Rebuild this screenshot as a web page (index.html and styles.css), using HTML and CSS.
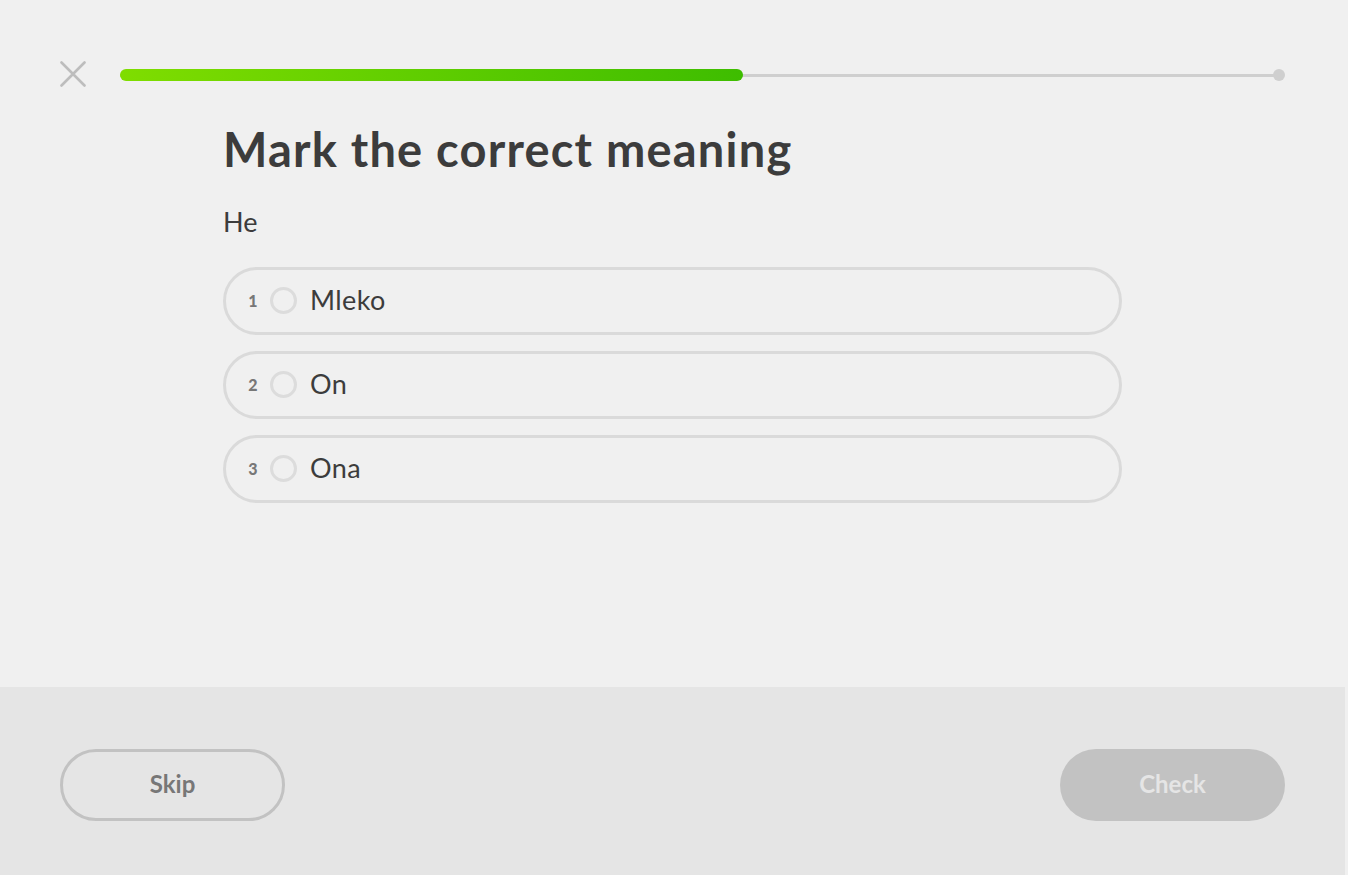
FILE: index.html
```html
<!DOCTYPE html>
<html lang="en">
<head>
<meta charset="utf-8">
<title>Mark the correct meaning</title>
<link rel="stylesheet" href="styles.css">
</head>
<body>
<div class="app">
  <header class="top">
    <button class="close" aria-label="Close">
      <svg width="26" height="26" viewBox="0 0 26 26"><path d="M1.5 1.5 L24.5 24.5 M24.5 1.5 L1.5 24.5" stroke="#bdbdbd" stroke-width="2.6" stroke-linecap="round" fill="none"/></svg>
    </button>
    <div class="progress">
      <div class="track"></div>
      <div class="fill" style="width:623px"></div>
      <div class="dot"></div>
    </div>
  </header>
  <main class="content">
    <h1 class="title">Mark the correct meaning</h1>
    <p class="prompt">He</p>
    <ul class="choices">
      <li class="choice"><span class="num">1</span><span class="radio"></span><span class="label">Mleko</span></li>
      <li class="choice"><span class="num">2</span><span class="radio"></span><span class="label">On</span></li>
      <li class="choice"><span class="num">3</span><span class="radio"></span><span class="label">Ona</span></li>
    </ul>
  </main>
  <footer class="footer">
    <button class="btn skip">Skip</button>
    <button class="btn check">Check</button>
  </footer>
</div>
</body>
</html>
```
FILE: styles.css
```css
html, body {
  margin: 0;
  padding: 0;
  background: #f0f0f0;
}
body {
  font-family: Lato, "Open Sans", sans-serif;
  color: #3c3c3c;
}
.app {
  width: 1345px;
  height: 875px;
  display: flex;
  flex-direction: column;
}
.top {
  display: flex;
  align-items: center;
  gap: 34px;
  padding: 51px 60px 0 60px;
  height: 48px;
}
.close {
  width: 26px;
  height: 26px;
  padding: 0;
  border: 0;
  background: none;
  display: flex;
  margin-top: -2px;
}
.progress {
  flex: 1;
  height: 12px;
  position: relative;
}
.track {
  position: absolute;
  left: 0;
  right: 6px;
  top: 5px;
  height: 3px;
  background: #cfcfcf;
}
.fill {
  position: absolute;
  left: 0;
  top: 0;
  height: 12px;
  border-radius: 6px;
  background: linear-gradient(90deg, #7fdd00, #3ebd00);
}
.dot {
  position: absolute;
  right: 0;
  top: 0;
  width: 12px;
  height: 12px;
  border-radius: 50%;
  background: #cfcfcf;
}
.content {
  flex: 1;
  width: 899px;
  margin: 0 auto;
}
.title {
  margin: 22px 0 0 0;
  font-size: 47px;
  line-height: 56px;
  font-weight: 700;
  letter-spacing: 1.2px;
  color: #3c3c3c;
}
.prompt {
  margin: 29px 0 0 0;
  font-size: 27px;
  line-height: 32px;
  font-weight: 400;
}
.choices {
  list-style: none;
  margin: 29px 0 0 0;
  padding: 0;
  display: flex;
  flex-direction: column;
  gap: 16px;
}
.choice {
  height: 62px;
  border: 3px solid #dadada;
  border-radius: 34px;
  display: flex;
  align-items: center;
  padding-left: 22px;
}
.num {
  width: 10px;
  font-size: 16px;
  font-weight: 900;
  color: #777777;
  text-align: center;
  margin-top: -2px;
}
.radio {
  width: 21px;
  height: 21px;
  border: 3px solid #dcdcdc;
  border-radius: 50%;
  margin-left: 12px;
  margin-top: -2px;
}
.label {
  margin-left: 13px;
  font-size: 27px;
  font-weight: 400;
  letter-spacing: 0.4px;
  color: #3c3c3c;
  margin-top: -3px;
}
.footer {
  height: 126px;
  padding: 62px 60px 0 60px;
  background: #e5e5e5;
  display: flex;
  justify-content: space-between;
  align-items: flex-start;
}
.btn {
  width: 225px;
  height: 72px;
  border-radius: 36px;
  font-family: Lato, "Open Sans", sans-serif;
  font-size: 24px;
  font-weight: 700;
  padding: 0 0 3px 0;
}
.skip {
  background: transparent;
  border: 3px solid #c2c2c2;
  color: #777777;
}
.check {
  background: #c2c2c2;
  border: 0;
  color: #e5e5e5;
}
```
